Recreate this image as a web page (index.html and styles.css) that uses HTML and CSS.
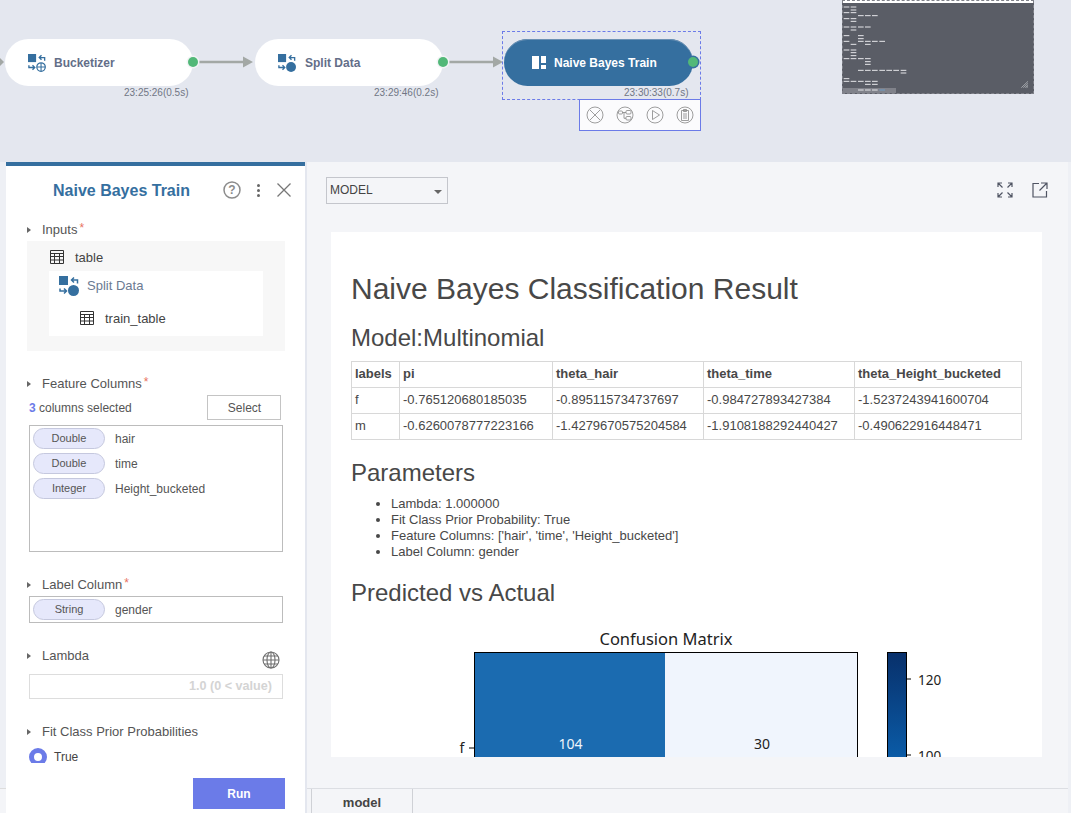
FILE: index.html
```html
<!DOCTYPE html>
<html lang="en">
<head>
<meta charset="utf-8">
<title>Naive Bayes Train</title>
<link rel="stylesheet" href="styles.css">
</head>
<body>
<svg class="defs" width="0" height="0">
  <symbol id="i-calc" viewBox="0 0 14 14"><path d="M.5.5h13v13H.5zM.5 3.500h13M.5 6.500h13M.5 10h13M4.500 3.500v10M9.500 3.500v10" fill="none" stroke="#333" stroke-width="1"/></symbol>
  <symbol id="i-split" viewBox="0 0 20 20"><rect x="0" y="0" width="9" height="9" fill="currentColor"/><circle cx="14.500" cy="14.500" r="5.500" fill="currentColor"/><path d="M18.500 7.500V4H12.500M15 1.500L12.500 4 15 6.500M1 12.500V15H7M5 12.500L7.500 15 5 17.500" fill="none" stroke="currentColor" stroke-width="1.500"/></symbol>
  <symbol id="i-bucket" viewBox="0 0 20 20"><rect x="0" y="0" width="9" height="9" fill="currentColor"/><circle cx="14.500" cy="14.500" r="4.700" fill="none" stroke="currentColor" stroke-width="1.400"/><path d="M14.500 10v9M10 14.500h9" stroke="currentColor" stroke-width="1.200"/><path d="M18.500 7.500V4H12.500M15 1.500L12.500 4 15 6.500M1 12.500V15H7M5 12.500L7.500 15 5 17.500" fill="none" stroke="currentColor" stroke-width="1.500"/></symbol>
</svg>

<div class="app">
  <section class="canvas">
    <svg class="edges" width="1071" height="162" viewBox="0 0 1071 162">
      <path d="M0 62h1M198 62h46M448 62h46" stroke="#a3a8a5" stroke-width="2.500" fill="none"/>
      <path d="M0 58l4 4-4 4zM243 56.500l10 5.500-10 5.500zM493 56.500l10 5.500-10 5.500z" fill="#a3a8a5"/>
    </svg>

    <div class="node node-bucket">
      <svg class="node-icon"><use href="#i-bucket"/></svg>
      <span class="node-name">Bucketizer</span>
      <i class="port"></i>
    </div>
    <div class="stamp stamp-bucket">23:25:26(0.5s)</div>

    <div class="node node-split">
      <svg class="node-icon"><use href="#i-split"/></svg>
      <span class="node-name">Split Data</span>
      <i class="port"></i>
    </div>
    <div class="stamp stamp-split">23:29:46(0.2s)</div>

    <div class="selection"></div>
    <div class="node node-train">
      <svg class="train-icon" viewBox="0 0 14 13"><path d="M0 0h7v13H0zM9 0h5v7H9zM9 9h5v4H9z" fill="#fff"/></svg>
      <span class="node-name">Naive Bayes Train</span>
      <i class="port port-active"></i>
    </div>
    <div class="stamp stamp-train">23:30:33(0.7s)</div>

    <div class="node-tools">
      <svg class="tool" viewBox="0 0 18 18"><circle cx="9" cy="9" r="8"/><path d="M4 4l10 10M14 4L4 14"/></svg>
      <svg class="tool" viewBox="0 0 18 18"><circle cx="9" cy="9" r="8"/><rect x="2.500" y="5" width="4" height="3" rx="1"/><rect x="10" y="4.500" width="5" height="3.500" rx="1"/><rect x="10" y="10.500" width="5" height="3.500" rx="1"/><path d="M6.500 6.500h3.500M8 6.500V12.300H10"/></svg>
      <svg class="tool" viewBox="0 0 18 18"><circle cx="9" cy="9" r="8"/><path d="M6.500 4.500l7 4.500-7 4.500z"/></svg>
      <svg class="tool" viewBox="0 0 18 18"><circle cx="9" cy="9" r="8"/><path d="M5.500 4.500h7v10h-7zM7.500 3.500h3v2h-3zM7 8h4M7 10h4M7 12h4"/></svg>
    </div>

    <div class="minimap">
      <svg class="minimap-art" viewBox="0 0 660 300">
        <rect class="mm-bar" x="38" y="264" width="160" height="15"/>
        <path class="mm-dash" d="M41 21h17m4 0h17M62 30h17M41 38h17m4 0h17M84 47h17m4 0h17m4 0h17M41 56h17m4 0h17M62 64h17M41 81h17m4 0h17m5 0h17m4 0h17M62 90h17M41 107h17m26 0h17M84 116h17M41 124h17m26 0h17m4 0h17m4 0h17m5 0h17M62 133h17m26 0h17M41 150h17m4 0h17M62 158h17M62 167h17M41 176h17m4 0h17m5 0h17m4 0h17M105 185h17M105 193h17M84 211h17m4 0h17m4 0h17m5 0h17m4 0h17m4 0h17m5 0h17M212 219h17M41 236h17M41 244h17m4 0h17m5 0h17m4 0h17m4 0h17M105 253h17m4 0h17M84 270h17m4 0h17m4 0h17"/>
        <path class="mm-blue" d="M148 270h17"/>
        <path class="mm-grip" d="M574 263l20-19M580 263l14-13M586 263l8-7M590 263l4-3"/>
      </svg>
    </div>
  </section>

  <section class="work">
    <div class="gutter"></div>

    <aside class="panel">
      <header class="panel-head">
        <h2 class="panel-title">Naive Bayes Train</h2>
        <svg class="head-help" viewBox="0 0 18 18"><circle cx="9" cy="9" r="8"/><text x="9" y="13">?</text></svg>
        <span class="head-dots"><i></i><i></i><i></i></span>
        <svg class="head-close" viewBox="0 0 14 14"><path d="M0.500 0.500l13 13M13.500 0.500l-13 13"/></svg>
      </header>

      <div class="panel-scroll">
        <div class="label label-inputs"><span>Inputs</span><em>*</em></div>
        <div class="inputs-box">
          <div class="input-row"><svg class="calc"><use href="#i-calc"/></svg><span>table</span></div>
          <div class="source">
            <div class="source-name"><svg class="source-icon"><use href="#i-split"/></svg><span>Split Data</span></div>
            <div class="source-port"><svg class="calc"><use href="#i-calc"/></svg><span>train_table</span></div>
          </div>
        </div>

        <div class="label label-feature"><span>Feature Columns</span><em>*</em></div>
        <div class="select-row">
          <span class="count"><b>3</b> columns selected</span>
          <button class="select-btn" type="button">Select</button>
        </div>
        <div class="column-box">
          <div class="column"><span class="pill">Double</span><span>hair</span></div>
          <div class="column"><span class="pill">Double</span><span>time</span></div>
          <div class="column"><span class="pill">Integer</span><span>Height_bucketed</span></div>
        </div>

        <div class="label label-column"><span>Label Column</span><em>*</em></div>
        <div class="single-box">
          <div class="column"><span class="pill">String</span><span>gender</span></div>
        </div>

        <div class="label label-lambda">
          <span>Lambda</span>
          <svg class="globe" viewBox="0 0 18 18"><circle cx="9" cy="9" r="8"/><ellipse cx="9" cy="9" rx="4" ry="8"/><path d="M9 1v16M1 9h16M2 5h14M2 13h14"/></svg>
        </div>
        <div class="value-input">1.0 (0 &lt; value)</div>

        <div class="label label-fit"><span>Fit Class Prior Probabilities</span></div>
        <div class="radio-row"><i class="radio"></i><span>True</span></div>
      </div>

      <div class="panel-foot"><button class="run" type="button">Run</button></div>
    </aside>

    <main class="main">
      <div class="toolbar">
        <div class="dropdown"><span>MODEL</span><i></i></div>
        <div class="tool-actions">
          <svg class="action" viewBox="0 0 16 16"><path d="M1 5V1h4M11 1h4v4M15 11v4h-4M5 15H1v-4M1 1l4.500 4.500M15 1l-4.500 4.500M15 15l-4.500-4.500M1 15l4.500-4.500"/></svg>
          <svg class="action" viewBox="0 0 16 16"><path d="M7 1.500H1v13.500h13.500V9M9 1h6v6M15 1L7.500 8.500"/></svg>
        </div>
      </div>

      <article class="report">
        <h1>Naive Bayes Classification Result</h1>
        <h2>Model:Multinomial</h2>
        <table class="result">
          <colgroup><col class="c1"><col class="c2"><col class="c3"><col class="c4"><col class="c5"></colgroup>
          <tr><th>labels</th><th>pi</th><th>theta_hair</th><th>theta_time</th><th>theta_Height_bucketed</th></tr>
          <tr><td>f</td><td>-0.765120680185035</td><td>-0.895115734737697</td><td>-0.984727893427384</td><td>-1.5237243941600704</td></tr>
          <tr><td>m</td><td>-0.6260078777223166</td><td>-1.4279670575204584</td><td>-1.9108188292440427</td><td>-0.490622916448471</td></tr>
        </table>
        <h2 class="h-params">Parameters</h2>
        <ul class="params">
          <li>Lambda: 1.000000</li>
          <li>Fit Class Prior Probability: True</li>
          <li>Feature Columns: ['hair', 'time', 'Height_bucketed']</li>
          <li>Label Column: gender</li>
        </ul>
        <h2 class="h-pred">Predicted vs Actual</h2>
        <svg class="matrix" viewBox="351 622 671 200" width="671" height="200">
          <defs>
            <linearGradient id="blues" x1="0" y1="0" x2="0" y2="1">
              <stop offset="0" stop-color="#08306b"/>
              <stop offset="0.6" stop-color="#0a5aa5"/>
              <stop offset="1" stop-color="#3a8ac4"/>
            </linearGradient>
          </defs>
          <text class="m-title" x="666" y="644.500">Confusion Matrix</text>
          <rect x="474" y="652" width="191" height="170" fill="#1b6bb0"/>
          <rect x="665" y="652" width="193" height="170" fill="#f0f5fd"/>
          <rect x="474.500" y="652.500" width="383" height="170" fill="none" stroke="#000"/>
          <text class="m-num m-light" x="570.500" y="749">104</text>
          <text class="m-num" x="762" y="749">30</text>
          <text class="m-num" x="462" y="753">f</text>
          <path d="M469 748h5" stroke="#000"/>
          <rect x="887.500" y="652.500" width="19" height="170" fill="url(#blues)" stroke="#000"/>
          <path d="M906 679h5M906 755h5" stroke="#000"/>
          <text class="m-tick" x="918" y="684.500">120</text>
          <text class="m-tick" x="918" y="760.500">100</text>
        </svg>
      </article>

      <nav class="tabs"><span class="tab">model</span></nav>
    </main>

    <div class="gutter gutter-right"></div>
  </section>
</div>
</body>
</html>
```
FILE: styles.css
```css
* { box-sizing: border-box; }
html, body { margin: 0; height: 100%; }
body {
  background: #e4e7ef;
  font-family: "Liberation Sans", Arial, sans-serif;
  font-size: 13px;
  color: #444;
  overflow: hidden;
}
.defs { position: absolute; }
.app { width: 1071px; height: 813px; display: flex; flex-direction: column; overflow: hidden; }

/* Workflow canvas */
.canvas { position: relative; height: 162px; flex: none; }
.edges { position: absolute; left: 0; top: 0; }
.node {
  position: absolute;
  top: 39px;
  width: 188px;
  height: 47px;
  border-radius: 24px;
  background: #fff;
  color: #356f9f;
  display: flex;
  align-items: center;
}
.node-bucket { left: 5px; }
.node-split { left: 255px; }
.node-train { left: 504px; width: 189px; background: #356f9f; box-shadow: inset 0 1px 0 #6b91b4; }
.node-icon { width: 18px; height: 18px; margin-left: 23px; flex: none; }
.train-icon { width: 14px; height: 13px; margin-left: 28px; flex: none; }
.node-name { font-size: 12px; font-weight: 700; color: #636e88; margin-left: 8px; white-space: nowrap; }
.node-split .node-name { margin-left: 9px; }
.node-train .node-name { color: #fff; margin-left: 8px; }
.port {
  position: absolute;
  right: -5px;
  top: 18px;
  width: 10px;
  height: 10px;
  border-radius: 50%;
  background: #52b878;
  box-shadow: 0 0 0 1.500px #f2f4f6;
}
.port-active { box-shadow: 0 0 0 1.500px #356f9f; }
.stamp { position: absolute; top: 87px; font-size: 10px; line-height: 12px; color: #707684; white-space: nowrap; }
.stamp-bucket { left: 124px; }
.stamp-split { left: 374px; }
.stamp-train { left: 624px; }
.selection { position: absolute; left: 502px; top: 31px; width: 199px; height: 69px; border: 1px dashed #6b7be8; }
.node-tools {
  position: absolute;
  left: 579px;
  top: 99px;
  width: 122px;
  height: 32px;
  border: 1px solid #6b7be8;
  background: #fbfbfd;
  display: flex;
  align-items: center;
  justify-content: center;
  gap: 12px;
}
.tool { width: 18px; height: 18px; fill: none; stroke: #858585; stroke-width: 0.800; }
.minimap {
  position: absolute;
  left: 842px;
  top: 0;
  width: 192px;
  height: 94px;
  background: #5a5d66;
  border-top: 3px solid #fff;
  outline: 1px dashed #80828a;
  outline-offset: -1px;
  overflow: hidden;
}
.minimap-art { position: absolute; left: -12px; top: -3px; width: 220px; height: 100px; }
.mm-dash { fill: none; stroke: #e6e7ea; stroke-width: 3; }
.mm-blue { fill: none; stroke: #6d9cc6; stroke-width: 3; }
.mm-bar { fill: #80828a; }
.mm-grip { fill: none; stroke: #d4d6da; stroke-width: 1.800; }

/* Lower work area */
.work { flex: 1; display: flex; min-height: 0; }
.gutter { flex: none; width: 6px; background: linear-gradient(#eef0f5 626px, #ddd 626px, #ddd 627px, #f4f5f8 627px); }
.gutter-right { width: 3px; background: #eef0f5; }

.panel {
  flex: none;
  width: 299px;
  background: #fff;
  border-top: 4px solid #356f9f;
  display: flex;
  flex-direction: column;
  color: #555;
}
.panel-head { height: 48px; flex: none; display: flex; align-items: center; position: relative; }
.panel-title { margin: 1px 0 0 47px; width: 136px; font-size: 16px; font-weight: 700; color: #356f9f; white-space: nowrap; }
.head-help { width: 18px; height: 18px; margin-left: 34px; fill: none; stroke: #8b8b8b; stroke-width: 1.500; }
.head-help text { fill: #8b8b8b; stroke: none; font-size: 12px; font-weight: 700; text-anchor: middle; font-family: "Liberation Sans", sans-serif; }
.head-dots { display: flex; flex-direction: column; gap: 2px; margin-left: 16px; width: 3px; }
.head-dots i { width: 3px; height: 3px; border-radius: 50%; background: #666; }
.head-close { width: 14px; height: 14px; margin-left: 17px; fill: none; stroke: #777; stroke-width: 1.300; }

.panel-scroll { height: 549px; overflow: hidden; flex: none; }
.label {
  position: relative;
  margin-left: 36px;
  height: 18px;
  line-height: 20px;
  font-size: 13px;
  display: flex;
  color: #555;
}
.label::before {
  content: "";
  position: absolute;
  left: -15px;
  top: 7px;
  border-left: 4px solid #666;
  border-top: 3.500px solid transparent;
  border-bottom: 3.500px solid transparent;
}
.label em { font-style: normal; color: #e8735f; font-size: 12px; line-height: 12px; margin: 2px 0 0 2px; }
.label-inputs { margin-top: 6px; }
.label-feature { margin-top: 23px; }
.label-column { margin-top: 23px; }
.label-lambda { margin-top: 23px; }
.label-fit { margin-top: 23px; }
.globe { position: absolute; left: 220px; top: 5px; width: 18px; height: 18px; fill: none; stroke: #6f6f6f; stroke-width: 1.100; }

.inputs-box { margin: 3px 20px 0 21px; height: 110px; background: #f7f7f7; padding-top: 6px; }
.input-row { display: flex; align-items: center; height: 20px; margin-left: 23px; gap: 11px; font-size: 13px; color: #444; }
.calc { width: 14px; height: 14px; flex: none; }
.source { margin: 4px 22px 0 22px; height: 65px; background: #fff; }
.source-name { display: flex; align-items: center; height: 28px; padding-left: 10px; gap: 8px; color: #6b7a92; font-size: 13px; }
.source-icon { width: 20px; height: 20px; color: #356f9f; flex: none; margin-top: 2px; }
.source-port { display: flex; align-items: center; height: 22px; margin-top: 8px; padding-left: 31px; gap: 11px; color: #444; font-size: 13px; }

.select-row { display: flex; justify-content: space-between; align-items: center; margin: 3px 24px 0 23px; height: 25px; }
.count { font-size: 12px; color: #555; }
.count b { color: #6b7be8; }
.select-btn {
  width: 74px;
  height: 25px;
  border: 1px solid #c4c4c4;
  background: #fff;
  font: 12px "Liberation Sans", Arial, sans-serif;
  color: #555;
  padding: 0 0 0 1px;
}
.column-box, .single-box { margin: 5px 22px 0 23px; border: 1px solid #bcbcbc; padding: 2px 3px; }
.column-box { height: 127px; display: flex; flex-direction: column; gap: 4px; }
.single-box { margin-top: 3px; height: 27px; }
.column { display: flex; align-items: center; gap: 10px; height: 21px; font-size: 12px; color: #555; }
.pill {
  width: 72px;
  height: 21px;
  border-radius: 11px;
  background: #e6e8fb;
  border: 1px solid #c5c8de;
  text-align: center;
  line-height: 18px;
  font-size: 11px;
  color: #555;
  flex: none;
}
.value-input {
  margin: 10px 22px 0 23px;
  height: 25px;
  border: 1px solid #ddd;
  text-align: right;
  line-height: 22px;
  padding-right: 10px;
  font-size: 12.600px;
  font-weight: 700;
  color: #d4d4d4;
}
.radio-row { display: flex; align-items: center; gap: 7px; margin: 7px 0 0 23px; height: 20px; font-size: 12px; color: #444; }
.radio { width: 18px; height: 18px; border-radius: 50%; border: 5px solid #6b7be8; background: #fff; flex: none; }
.panel-foot { flex: 1; display: flex; justify-content: flex-end; align-items: flex-start; padding: 15px 20px 0 0; }
.run {
  width: 92px;
  height: 31px;
  border: 0;
  background: #6b7be8;
  color: #fff;
  font: 700 12px "Liberation Sans", Arial, sans-serif;
}

/* Main column */
.main { flex: none; width: 761px; margin-left: 2px; background: #f4f5f8; display: flex; flex-direction: column; }
.toolbar { height: 70px; flex: none; display: flex; justify-content: space-between; align-items: flex-start; padding: 15px 20px 0 19px; }
.dropdown {
  width: 122px;
  height: 27px;
  border: 1px solid #c4c6cc;
  background: #f4f5f8;
  display: flex;
  align-items: center;
  justify-content: space-between;
  padding: 0 5px 2px 3px;
  font-size: 12px;
  color: #444;
}
.dropdown i { border-top: 4px solid #666; border-left: 4px solid transparent; border-right: 4px solid transparent; margin-top: 5px; }
.tool-actions { display: flex; gap: 19px; padding-top: 5px; }
.action { width: 16px; height: 16px; fill: none; stroke: #4f5463; stroke-width: 1.200; }

.report { margin-left: 24px; width: 711px; height: 525px; flex: none; background: #fff; padding: 0 20px; overflow: hidden; color: #484848; }
.report h1 { margin: 39px 0 0; font-size: 30px; line-height: 36px; font-weight: 400; }
.report h2 { margin: 17px 0 0; font-size: 24px; line-height: 28px; font-weight: 400; }
.result { margin-top: 9px; border-collapse: collapse; table-layout: fixed; width: 670px; font-size: 13px; }
.result .c1 { width: 48px; } .result .c2 { width: 153px; } .result .c3 { width: 151px; } .result .c4 { width: 151px; } .result .c5 { width: 167px; }
.result th, .result td { border: 1px solid #d8d8d8; height: 26px; padding: 0 3px 2px; text-align: left; white-space: nowrap; }
.report .h-params { margin-top: 19px; }
.params { margin: 9px 0 0; padding-left: 40px; font-size: 13px; line-height: 16px; }
.report .h-pred { margin-top: 19px; }
.matrix { display: block; margin-top: 15px; overflow: hidden; }
.matrix text { font-family: "Noto Sans", "Open Sans", sans-serif; }
.m-title { font-size: 16.500px; text-anchor: middle; fill: #222; }
.m-num { font-size: 14px; text-anchor: middle; fill: #222; }
.m-light { fill: #eef4fb; }
.m-tick { font-size: 13.500px; fill: #222; }

.tabs { margin-top: 31px; flex: 1; border-top: 1px solid #dcdee3; padding-left: 4px; display: flex; }
.tab {
  width: 102px;
  border-left: 1px solid #cfd1d6;
  border-right: 1px solid #cfd1d6;
  text-align: center;
  line-height: 27px;
  font-size: 13px;
  font-weight: 700;
  color: #444;
}
```
